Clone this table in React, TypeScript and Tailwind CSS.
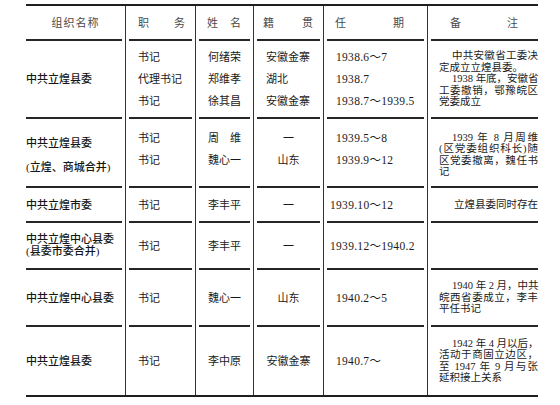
import type { ReactNode } from "react";

type NoteLine = { text: string; kind: "first" | "full" | "last" };

type Row = {
  height: string;
  org: string[];
  orgLh: string;
  roles: string[];
  names: string[];
  origins: string[];
  originLeft?: boolean;
  terms: string[];
  termPad: string;
  note: NoteLine[];
  noteRight?: boolean;
  shift: string;
  orgShift: string;
};

const rows: Row[] = [
  {
    height: "h-[78px]",
    org: ["中共立煌县委"],
    orgLh: "leading-[22px]",
    roles: ["书记", "代理书记", "书记"],
    names: ["何绪荣", "郑维孝", "徐其昌"],
    origins: ["安徽金寨", "湖北", "安徽金寨"],
    originLeft: true,
    terms: ["1938.6～7", "1938.7", "1938.7～1939.5"],
    termPad: "pl-[12px]",
    note: [
      { text: "中共安徽省工委决", kind: "first" },
      { text: "定成立立煌县委。", kind: "last" },
      { text: "1938 年底，安徽省", kind: "first" },
      { text: "工委撤销，鄂豫皖区", kind: "full" },
      { text: "党委成立", kind: "last" },
    ],
    shift: "pb-0",
    orgShift: "pb-0",
  },
  {
    height: "h-[69px]",
    org: ["中共立煌县委", "(立煌、商城合并)"],
    orgLh: "leading-[24px]",
    roles: ["书记", "书记"],
    names: ["周　维", "魏心一"],
    origins: ["一", "山东"],
    terms: ["1939.5～8", "1939.9～12"],
    termPad: "pl-[12px]",
    note: [
      { text: "1939 年 8 月周维", kind: "first" },
      { text: "(区党委组织科长)随", kind: "full" },
      { text: "区党委撤离，魏任书", kind: "full" },
      { text: "记", kind: "last" },
    ],
    shift: "pb-[8px]",
    orgShift: "pt-[4px]",
  },
  {
    height: "h-[35px]",
    org: ["中共立煌市委"],
    orgLh: "leading-[22px]",
    roles: ["书记"],
    names: ["李丰平"],
    origins: ["一"],
    terms: ["1939.10～12"],
    termPad: "pl-[6px]",
    note: [{ text: "立煌县委同时存在", kind: "last" }],
    noteRight: true,
    shift: "pb-0",
    orgShift: "pb-0",
  },
  {
    height: "h-[47px]",
    org: ["中共立煌中心县委", "(县委市委合并)"],
    orgLh: "leading-[11.5px]",
    roles: ["书记"],
    names: ["李丰平"],
    origins: ["一"],
    terms: ["1939.12～1940.2"],
    termPad: "pl-[6px]",
    note: [],
    shift: "pb-0",
    orgShift: "pb-0",
  },
  {
    height: "h-[57px]",
    org: ["中共立煌中心县委"],
    orgLh: "leading-[22px]",
    roles: ["书记"],
    names: ["魏心一"],
    origins: ["山东"],
    terms: ["1940.2～5"],
    termPad: "pl-[12px]",
    note: [
      { text: "1940 年 2 月，中共", kind: "first" },
      { text: "皖西省委成立，李丰", kind: "full" },
      { text: "平任书记", kind: "last" },
    ],
    shift: "pb-0",
    orgShift: "pb-0",
  },
  {
    height: "h-[69px]",
    org: ["中共立煌县委"],
    orgLh: "leading-[22px]",
    roles: ["书记"],
    names: ["李中原"],
    origins: ["安徽金寨"],
    terms: ["1940.7～"],
    termPad: "pl-[12px]",
    note: [
      { text: "1942 年 4 月以后，", kind: "first" },
      { text: "活动于商固立边区，", kind: "full" },
      { text: "至 1947 年 9 月与张", kind: "full" },
      { text: "延积接上关系", kind: "last" },
    ],
    shift: "pb-0",
    orgShift: "pb-0",
  },
];

// horizontal rules in the body stop short of the vertical rules
const ruleFirst =
  "relative before:absolute before:top-[-1px] before:left-0 before:right-[3px] before:h-[2px] before:bg-[#262626]";
const ruleMid =
  "relative border-l border-[#333] before:absolute before:top-[-1px] before:left-[3px] before:right-[3px] before:h-[2px] before:bg-[#262626]";
const ruleLast =
  "relative border-l border-[#333] before:absolute before:top-[-1px] before:left-[3px] before:right-0 before:h-[2px] before:bg-[#262626]";

function Spread({ chars, className }: { chars: string[]; className: string }) {
  return (
    <div className={`flex justify-between ${className}`}>
      {chars.map((c) => (
        <span key={c}>{c}</span>
      ))}
    </div>
  );
}

function Lines({ items, className }: { items: string[]; className: string }) {
  return (
    <div className={className}>
      {items.map((t, i) => (
        <div key={i} className="whitespace-nowrap">
          {t}
        </div>
      ))}
    </div>
  );
}

function Note({ lines, right }: { lines: NoteLine[]; right?: boolean }): ReactNode {
  if (lines.length === 0) return null;
  return (
    <div className="text-[10.5px] leading-[11.5px]">
      {lines.map((l, i) => (
        <div
          key={i}
          className={`whitespace-nowrap ${
            right
              ? "text-right"
              : l.kind === "first"
                ? "indent-[13px] text-justify [text-align-last:justify]"
                : l.kind === "full"
                  ? "text-justify [text-align-last:justify]"
                  : "text-left"
          }`}
        >
          {l.text}
        </div>
      ))}
    </div>
  );
}

export default function App() {
  return (
    <div className="h-[405px] w-[560px] bg-white pt-[4px] font-['Liberation_Serif','Noto_Sans_CJK_SC',serif] text-[#1a1a1a]">
      <div className="ml-[26px] w-[512px] border-y-2 border-[#1e1e1e]">
        <table className="w-[512px] table-fixed border-separate border-spacing-0">
          <colgroup>
            <col className="w-[99px]" />
            <col className="w-[70px]" />
            <col className="w-[58px]" />
            <col className="w-[70px]" />
            <col className="w-[104px]" />
            <col className="w-[111px]" />
          </colgroup>
          <thead>
            <tr className="h-[34px] text-[11px] text-[#4a4a4a]">
              <th className="p-0 text-center font-normal tracking-[1px]">组织名称</th>
              <th className="border-l border-[#333] p-0 font-normal">
                <Spread chars={["职", "务"]} className="pl-[12px] pr-[10px]" />
              </th>
              <th className="border-l border-[#333] p-0 font-normal">
                <Spread chars={["姓", "名"]} className="pl-[11px] pr-[12px]" />
              </th>
              <th className="border-l border-[#333] p-0 font-normal">
                <Spread chars={["籍", "贯"]} className="pl-[9px] pr-[10px]" />
              </th>
              <th className="border-l border-[#333] p-0 font-normal">
                <Spread chars={["任", "期"]} className="pl-[11px] pr-[23px]" />
              </th>
              <th className="border-l border-[#333] p-0 font-normal">
                <Spread chars={["备", "注"]} className="pl-[22px] pr-[20px]" />
              </th>
            </tr>
          </thead>
          <tbody>
            {rows.map((r, i) => (
              <tr key={i} className={`${r.height} text-[11px]`}>
                <td className={`${ruleFirst} p-0 align-middle`}>
                  <Lines
                    items={r.org}
                    className={`${r.orgLh} ${r.orgShift} font-medium text-[#161616]`}
                  />
                </td>
                <td className={`${ruleMid} p-0 pl-[12px] align-middle`}>
                  <Lines items={r.roles} className={`leading-[22px] ${r.shift}`} />
                </td>
                <td className={`${ruleMid} p-0 text-center align-middle`}>
                  <Lines items={r.names} className={`leading-[22px] ${r.shift}`} />
                </td>
                <td
                  className={`${ruleMid} p-0 align-middle ${
                    r.originLeft ? "pl-[12px] text-left" : "text-center"
                  }`}
                >
                  <Lines items={r.origins} className={`leading-[22px] ${r.shift}`} />
                </td>
                <td className={`${ruleMid} p-0 ${r.termPad} align-middle`}>
                  <Lines
                    items={r.terms}
                    className={`text-[11.5px] leading-[22px] tracking-[0.3px] ${r.shift}`}
                  />
                </td>
                <td className={`${ruleLast} p-0 pl-[11px] align-middle`}>
                  <div className={i === 1 ? "pt-[4px]" : ""}>
                    <Note lines={r.note} right={r.noteRight} />
                  </div>
                </td>
              </tr>
            ))}
          </tbody>
        </table>
      </div>
    </div>
  );
}
